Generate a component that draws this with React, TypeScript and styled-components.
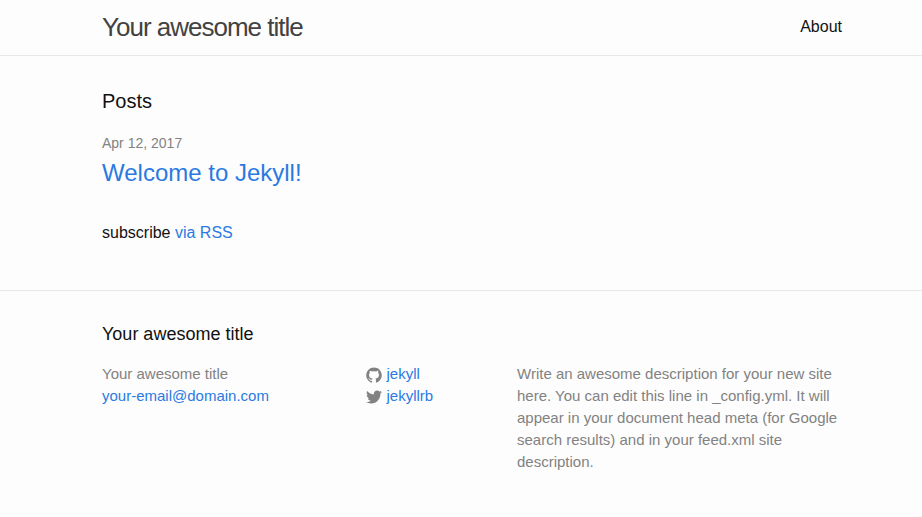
import React from "react";
import styled, { createGlobalStyle } from "styled-components";

const GlobalStyle = createGlobalStyle`
  body, h1, h2, h3, p, ul { margin: 0; padding: 0; }
  body {
    font: 400 16px/1.5 "Liberation Sans", Arial, sans-serif;
    color: #111;
    background: #fdfdfd;
    font-kerning: normal;
    overflow: hidden;
  }
  ul { list-style: none; }
`;

const Wrapper = styled.div`
  width: 740px;
  margin-left: 102px;
`;

const Link = styled.a`
  color: #2a7ae2;
  text-decoration: none;
`;

const Header = styled.header`
  border-bottom: 1px solid #e8e8e8;
`;

const HeaderBar = styled(Wrapper)`
  display: flex;
  justify-content: space-between;
  height: 55px;
`;

const SiteTitle = styled.a`
  font-size: 26px;
  font-weight: 300;
  line-height: 54px;
  letter-spacing: -1px;
  color: #424242;
`;

const NavLink = styled.a`
  line-height: 54px;
  color: #111;
`;

const Main = styled.main`
  padding: 30px 0;
  height: 174px;
`;

const Heading = styled.h1`
  font-size: 20px;
  font-weight: 400;
  margin-bottom: 17px;
`;

const PostList = styled.ul`
  margin-bottom: 30px;
`;

const PostMeta = styled.span`
  display: block;
  font-size: 14px;
  margin-bottom: 1px;
  color: #828282;
`;

const PostTitle = styled.h2`
  font-size: 24px;
  font-weight: 400;
  line-height: 36px;
`;

const Footer = styled.footer`
  border-top: 1px solid #e8e8e8;
  padding: 30px 0;
`;

const FooterHeading = styled.h2`
  font-size: 18px;
  font-weight: 400;
  margin-bottom: 15px;
`;

const Columns = styled.div`
  display: grid;
  grid-template-columns: 264px 151px 325px;
  font-size: 15px;
  line-height: 22px;
  color: #828282;
`;

const SocialLink = styled(Link)`
  display: flex;
  align-items: center;
  gap: 4.5px;
`;

const Icon = styled.svg`
  width: 16px;
  height: 16px;
  fill: #828282;
  margin-top: 2px;
`;

const GITHUB =
  "M7.999,0.431c-4.285,0-7.76,3.474-7.76,7.761 c0,3.428,2.223,6.337,5.307,7.363c0.388,0.071,0.53-0.168,0.53-0.374c0-0.184-0.007-0.672-0.01-1.32 c-2.159,0.469-2.614-1.04-2.614-1.04c-0.353-0.896-0.862-1.135-0.862-1.135c-0.705-0.481,0.053-0.472,0.053-0.472 c0.779,0.055,1.189,0.8,1.189,0.8c0.692,1.186,1.816,0.843,2.258,0.645c0.071-0.502,0.271-0.843,0.493-1.037 C4.86,11.425,3.049,10.76,3.049,7.786c0-0.847,0.302-1.54,0.799-2.082C3.768,5.507,3.501,4.718,3.924,3.65 c0,0,0.652-0.209,2.134,0.796C6.677,4.273,7.34,4.187,8,4.184c0.659,0.003,1.323,0.089,1.943,0.261 c1.482-1.004,2.132-0.796,2.132-0.796c0.423,1.068,0.157,1.857,0.077,2.054c0.497,0.542,0.798,1.235,0.798,2.082 c0,2.981-1.814,3.637-3.543,3.829c0.279,0.24,0.527,0.713,0.527,1.437c0,1.037-0.01,1.874-0.01,2.129 c0,0.208,0.14,0.449,0.534,0.373c3.081-1.028,5.302-3.935,5.302-7.362C15.76,3.906,12.285,0.431,7.999,0.431z";
const TWITTER =
  "M15.969,3.058c-0.586,0.26-1.217,0.436-1.878,0.515c0.675-0.405,1.194-1.045,1.438-1.809c-0.632,0.375-1.332,0.647-2.076,0.793c-0.596-0.636-1.446-1.033-2.387-1.033c-1.806,0-3.27,1.464-3.27,3.27 c0,0.256,0.029,0.506,0.085,0.745C5.163,5.404,2.753,4.102,1.14,2.124C0.859,2.607,0.698,3.168,0.698,3.767 c0,1.134,0.577,2.135,1.455,2.722C1.616,6.472,1.112,6.325,0.671,6.08c0,0.014,0,0.027,0,0.041c0,1.584,1.127,2.906,2.623,3.206 C3.02,9.402,2.731,9.442,2.433,9.442c-0.211,0-0.416-0.021-0.615-0.059c0.416,1.299,1.624,2.245,3.055,2.271 c-1.119,0.877-2.529,1.4-4.061,1.4c-0.264,0-0.524-0.015-0.78-0.046c1.447,0.928,3.166,1.469,5.013,1.469 c6.015,0,9.304-4.983,9.304-9.304c0-0.142-0.003-0.283-0.009-0.423C14.976,4.29,15.531,3.714,15.969,3.058z";

const socials = [
  { name: "jekyll", path: GITHUB },
  { name: "jekyllrb", path: TWITTER },
];

export default function App() {
  return (
    <>
      <GlobalStyle />
      <Header>
        <HeaderBar>
          <SiteTitle>Your awesome title</SiteTitle>
          <NavLink>About</NavLink>
        </HeaderBar>
      </Header>
      <Main>
        <Wrapper>
          <Heading>Posts</Heading>
          <PostList>
            <li>
              <PostMeta>Apr 12, 2017</PostMeta>
              <PostTitle>
                <Link>Welcome to Jekyll!</Link>
              </PostTitle>
            </li>
          </PostList>
          <p>
            subscribe <Link>via RSS</Link>
          </p>
        </Wrapper>
      </Main>
      <Footer>
        <Wrapper>
          <FooterHeading>Your awesome title</FooterHeading>
          <Columns>
            <ul>
              <li>Your awesome title</li>
              <li>
                <Link>your-email@domain.com</Link>
              </li>
            </ul>
            <ul>
              {socials.map(({ name, path }) => (
                <li key={name}>
                  <SocialLink>
                    <Icon viewBox="0 0 16 16">
                      <path d={path} />
                    </Icon>
                    {name}
                  </SocialLink>
                </li>
              ))}
            </ul>
            <p>
              Write an awesome description for your new site here. You can edit this line in
              _config.yml. It will appear in your document head meta (for Google search results)
              and in your feed.xml site description.
            </p>
          </Columns>
        </Wrapper>
      </Footer>
    </>
  );
}
